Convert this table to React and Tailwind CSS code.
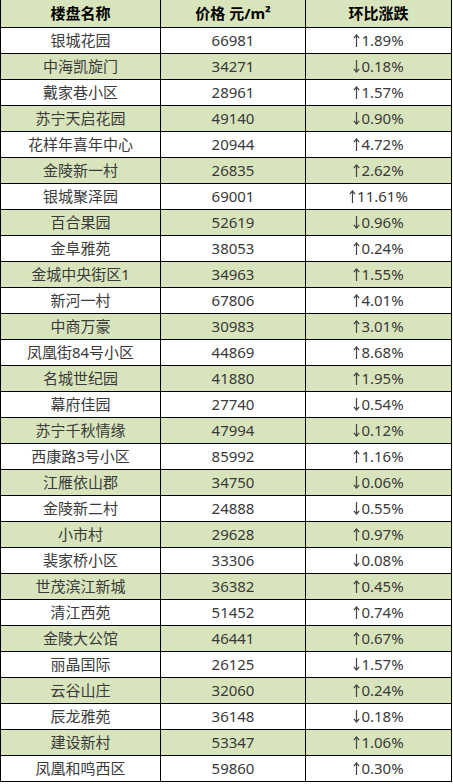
import React from "react";

const rows = [
  ["银城花园", "66981", "up", "1.89%"],
  ["中海凯旋门", "34271", "down", "0.18%"],
  ["戴家巷小区", "28961", "up", "1.57%"],
  ["苏宁天启花园", "49140", "down", "0.90%"],
  ["花样年喜年中心", "20944", "up", "4.72%"],
  ["金陵新一村", "26835", "up", "2.62%"],
  ["银城聚泽园", "69001", "up", "11.61%"],
  ["百合果园", "52619", "down", "0.96%"],
  ["金阜雅苑", "38053", "up", "0.24%"],
  ["金城中央街区1", "34963", "up", "1.55%"],
  ["新河一村", "67806", "up", "4.01%"],
  ["中商万豪", "30983", "up", "3.01%"],
  ["凤凰街84号小区", "44869", "up", "8.68%"],
  ["名城世纪园", "41880", "up", "1.95%"],
  ["幕府佳园", "27740", "down", "0.54%"],
  ["苏宁千秋情缘", "47994", "down", "0.12%"],
  ["西康路3号小区", "85992", "up", "1.16%"],
  ["江雁依山郡", "34750", "down", "0.06%"],
  ["金陵新二村", "24888", "down", "0.55%"],
  ["小市村", "29628", "up", "0.97%"],
  ["裴家桥小区", "33306", "down", "0.08%"],
  ["世茂滨江新城", "36382", "up", "0.45%"],
  ["清江西苑", "51452", "up", "0.74%"],
  ["金陵大公馆", "46441", "up", "0.67%"],
  ["丽晶国际", "26125", "down", "1.57%"],
  ["云谷山庄", "32060", "up", "0.24%"],
  ["辰龙雅苑", "36148", "down", "0.18%"],
  ["建设新村", "53347", "up", "1.06%"],
  ["凤凰和鸣西区", "59860", "up", "0.30%"],
];

const Arrow = ({ dir }) => (
  <svg width="7" height="15" viewBox="0 0 7 15" className="mr-[1px]">
    {dir === "up" ? (
      <g fill="none" stroke="#444" strokeWidth="1.2">
        <path d="M3.5 2v12" />
        <path d="M0.8 5.2L3.5 2l2.7 3.2" />
      </g>
    ) : (
      <g fill="none" stroke="#444" strokeWidth="1.2">
        <path d="M3.5 1v12" />
        <path d="M0.8 9.8L3.5 13l2.7-3.2" />
      </g>
    )}
  </svg>
);

const font = { fontFamily: '"Noto Sans", "Noto Sans CJK SC", sans-serif' };

export default function App() {
  return (
    <div className="w-[453px] bg-white" style={font}>
      <div className="w-[452px] border-l border-black">
        <div className="flex h-[28px] border-b border-black bg-[#d8e4bc] text-[15px] font-bold text-black">
          <div className="flex w-[160px] items-center justify-center border-r border-black">楼盘名称</div>
          <div className="flex w-[145px] items-center justify-center border-r border-black">价格 元/m²</div>
          <div className="flex w-[146px] items-center justify-center border-r border-black">环比涨跌</div>
        </div>
        {rows.map(([name, price, dir, pct], i) => (
          <div
            key={name}
            className={`flex h-[26px] border-b border-black text-[15px] text-[#3a3a3a] ${i % 2 === 1 ? "bg-[#d8e4bc]" : "bg-white"}`}
          >
            <div className="flex w-[160px] items-center justify-center border-r border-black">{name}</div>
            <div className="flex w-[145px] items-center justify-center border-r border-black">{price}</div>
            <div className="flex w-[146px] items-center justify-center border-r border-black">
              <Arrow dir={dir} />
              {pct}
            </div>
          </div>
        ))}
      </div>
    </div>
  );
}
